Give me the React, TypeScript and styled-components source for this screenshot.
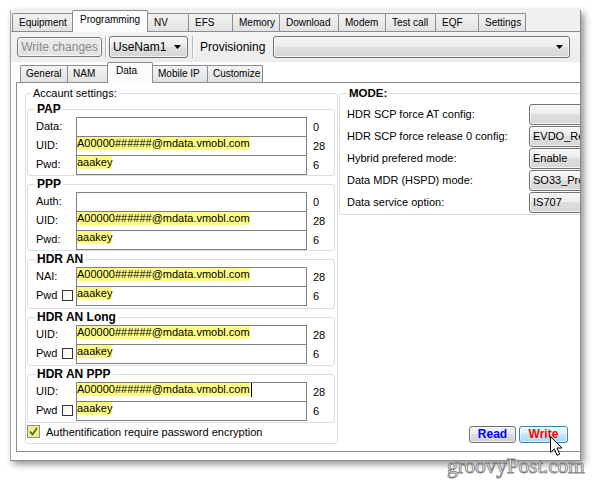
import React from "react";
import styled, { createGlobalStyle } from "styled-components";

const GlobalStyle = createGlobalStyle`
  html, body {
    margin: 0;
    padding: 0;
    background: #fff;
  }
  body {
    font-family: "Liberation Sans", Arial, sans-serif;
    font-size: 11px;
    color: #000;
  }
  * {
    box-sizing: border-box;
  }
`;

const Page = styled.div`
  position: relative;
  width: 597px;
  height: 480px;
  padding: 10px 0 0 10px;
  overflow: hidden;
`;

const Window = styled.div`
  width: 571px;
  height: 451px;
  display: flex;
  flex-direction: column;
  background: #f0f0f0;
  border-left: 1px solid #a7a7a7;
  border-right: 1px solid #8a8a8a;
  border-bottom: 1px solid #8a8a8a;
  box-shadow: 3px 3px 7px rgba(0, 0, 0, 0.45);
  overflow: hidden;
`;

const TabStrip = styled.div<{ $h: number; $pad: number }>`
  display: flex;
  align-items: flex-end;
  height: ${(p) => p.$h}px;
  padding-left: ${(p) => p.$pad}px;
  flex-shrink: 0;
`;

const OuterStrip = styled(TabStrip)`
  border-bottom: 1px solid #898c95;
`;

const Tab = styled.div<{ $w: number; $active?: boolean; $small?: boolean }>`
  position: relative;
  z-index: ${(p) => (p.$active ? 2 : 1)};
  width: ${(p) => p.$w}px;
  height: ${(p) =>
    p.$small ? (p.$active ? 21 : 17) : p.$active ? 22 : 18}px;
  margin-right: -1px;
  margin-bottom: ${(p) => (p.$active ? -1 : 0)}px;
  padding: ${(p) => (p.$small ? "1px" : "2px")} 0 0
    ${(p) => (p.$active ? (p.$small ? 8 : 7) : p.$small ? 5 : 6)}px;
  border: 1px solid #898c95;
  border-bottom: none;
  border-radius: 2px 2px 0 0;
  background: ${(p) =>
    p.$active ? "#fcfcfc" : "linear-gradient(#f3f3f3, #e2e2e2)"};
  font-size: 10px;
  line-height: ${(p) => (p.$small ? 13 : 14)}px;
  white-space: nowrap;
`;

const Toolbar = styled.div`
  display: flex;
  align-items: center;
  height: 30px;
  padding-left: 6px;
  flex-shrink: 0;
  background: linear-gradient(#f4f4f4, #ececec);
  font-size: 12px;
`;

const ToolButton = styled.div`
  width: 85px;
  height: 20px;
  border: 1px solid #7c7c7c;
  border-radius: 3px;
  background: linear-gradient(#ececec, #e2e2e2);
  box-shadow: inset 0 0 0 1px #f7f7f7;
  color: #8a8a8a;
  text-align: center;
  line-height: 18px;
`;

const Separator = styled.div<{ $l: number; $r: number }>`
  width: 2px;
  height: 22px;
  margin: 0 ${(p) => p.$r}px 0 ${(p) => p.$l}px;
  border-left: 1px solid #b8b8b8;
  border-right: 1px solid #fff;
`;

const Combo = styled.div<{ $w: number; $h: number; $ml?: number }>`
  display: flex;
  align-items: center;
  flex-shrink: 0;
  width: ${(p) => p.$w}px;
  height: ${(p) => p.$h}px;
  margin-left: ${(p) => p.$ml ?? 0}px;
  padding: 0 6px 0 3px;
  border: 1px solid #707070;
  border-radius: 3px;
  background: linear-gradient(#f6f6f6 0%, #ececec 49%, #dedede 50%, #d6d6d6 100%);
  box-shadow: inset 0 0 0 1px rgba(255, 255, 255, 0.7);
  white-space: nowrap;
  overflow: hidden;
`;

const ComboText = styled.span`
  flex: 1;
`;

const ToolLabel = styled.span`
  white-space: nowrap;
`;

const Content = styled.div`
  flex: 1;
  display: flex;
  flex-direction: column;
  background: #fff;
  padding: 0 0 6px 5px;
`;

const Panel = styled.div`
  display: flex;
  gap: 1px;
  width: 620px;
  flex-shrink: 0;
  padding: 4px 0 7px 8px;
  border: 1px solid #898c95;
  background: #fff;
`;

const Group = styled.fieldset<{ $w?: number; $pad: string; $mt?: number }>`
  margin: ${(p) => p.$mt ?? 0}px 0 0 0;
  min-width: 0;
  ${(p) => (p.$w ? `width: ${p.$w}px; flex-shrink: 0;` : "")}
  padding: ${(p) => p.$pad};
  border: 1px solid #d5dfe5;
  border-radius: 3px;
`;

const Legend = styled.legend<{ $bold?: boolean; $ml: number }>`
  margin-left: ${(p) => p.$ml}px;
  padding: 0 2px;
  font-size: ${(p) => (p.$bold ? 12 : 11)}px;
  font-weight: ${(p) => (p.$bold ? 700 : 400)};
  line-height: ${(p) => (p.$bold ? 14 : 13)}px;
`;

const ModeLegend = styled(Legend)`
  font-size: 11.5px;
  line-height: 13px;
`;

const Row = styled.div`
  display: flex;
  align-items: flex-start;
  height: 19px;
`;

const RowLabel = styled.div<{ $w: number }>`
  width: ${(p) => p.$w}px;
  height: 19px;
  line-height: 19px;
  flex-shrink: 0;
`;

const Box = styled.div`
  width: 11px;
  height: 11px;
  margin: 4px 3px 0 0;
  flex-shrink: 0;
  border: 1px solid #333;
  background: linear-gradient(135deg, #f4f4f4, #ffffff);
`;

const Input = styled.div`
  width: 231px;
  height: 20px;
  flex-shrink: 0;
  border: 1px solid #7f7f7f;
  background: #fff;
  line-height: 13px;
  white-space: nowrap;
`;

const Marked = styled.span`
  display: inline-block;
  background: #fdfd84;
  line-height: 13px;
`;

const Caret = styled.span`
  display: inline-block;
  width: 1px;
  height: 14px;
  margin-left: 1px;
  vertical-align: top;
  background: #000;
`;

const Count = styled.div`
  margin-left: 6px;
  line-height: 20px;
`;

const AuthRow = styled.div`
  display: flex;
  align-items: center;
  height: 13px;
  margin-top: 2px;
`;

const AuthBox = styled.div`
  width: 13px;
  height: 13px;
  margin-right: 6px;
  border: 1px solid #8e8f8f;
  background: #f0ee8a;
  display: flex;
  align-items: center;
  justify-content: center;
`;

const RightColumn = styled.div`
  display: flex;
  flex-direction: column;
  width: 262px;
  flex-shrink: 0;
`;

const ModeRow = styled.div`
  display: flex;
  align-items: center;
  height: 22px;
`;

const ModeLabel = styled.div`
  width: 182px;
  flex-shrink: 0;
`;

const ButtonRow = styled.div`
  display: flex;
  gap: 3px;
  margin-top: auto;
  margin-bottom: 1px;
  padding-left: 130px;
`;

const ActionButton = styled.div<{ $w: number; $color: string; $hot?: boolean }>`
  width: ${(p) => p.$w}px;
  height: 17px;
  border: 1px solid ${(p) => (p.$hot ? "#3c7fb1" : "#707070")};
  border-radius: 3px;
  background: ${(p) =>
    p.$hot
      ? "linear-gradient(#eaf6fd 0%, #d9f0fc 49%, #bee6fd 50%, #a7d9f5 100%)"
      : "linear-gradient(#f2f2f2 0%, #ebebeb 49%, #dddddd 50%, #cfcfcf 100%)"};
  box-shadow: inset 0 0 0 1px rgba(255, 255, 255, 0.6);
  color: ${(p) => p.$color};
  font-size: 12px;
  font-weight: 700;
  text-align: center;
  line-height: 15px;
`;

const Cursor = styled.svg`
  position: absolute;
  left: 550px;
  top: 436px;
`;

const Watermark = styled.div`
  position: absolute;
  left: 447px;
  top: 454px;
  font-family: "Liberation Serif", "Times New Roman", serif;
  font-size: 21.5px;
  color: #f3f3f3;
  -webkit-text-stroke: 0.8px #7a7a7a;
  letter-spacing: -0.2px;
  white-space: nowrap;
`;

const Arrow = () => (
  <svg width="7" height="4" viewBox="0 0 7 4">
    <path d="M0 0h7L3.5 4z" fill="#000" />
  </svg>
);

type Field = {
  label: string;
  value: string;
  count: number;
  check?: boolean;
  caret?: boolean;
};

type Section = { title: string; tail: number; rows: Field[] };

const UID = "A00000######@mdata.vmobl.com";

const sections: Section[] = [
  {
    title: "PAP",
    tail: 1,
    rows: [
      { label: "Data:", value: "", count: 0 },
      { label: "UID:", value: UID, count: 28 },
      { label: "Pwd:", value: "aaakey", count: 6 },
    ],
  },
  {
    title: "PPP",
    tail: 1,
    rows: [
      { label: "Auth:", value: "", count: 0 },
      { label: "UID:", value: UID, count: 28 },
      { label: "Pwd:", value: "aaakey", count: 6 },
    ],
  },
  {
    title: "HDR AN",
    tail: 3,
    rows: [
      { label: "NAI:", value: UID, count: 28 },
      { label: "Pwd", value: "aaakey", count: 6, check: true },
    ],
  },
  {
    title: "HDR AN Long",
    tail: 2,
    rows: [
      { label: "UID:", value: UID, count: 28 },
      { label: "Pwd", value: "aaakey", count: 6, check: true },
    ],
  },
  {
    title: "HDR AN PPP",
    tail: 2,
    rows: [
      { label: "UID:", value: UID, count: 28, caret: true },
      { label: "Pwd", value: "aaakey", count: 6, check: true },
    ],
  },
];

const outerTabs: [string, number][] = [
  ["Equipment", 61],
  ["Programming", 76],
  ["NV", 42],
  ["EFS", 45],
  ["Memory", 48],
  ["Download", 60],
  ["Modem", 48],
  ["Test call", 51],
  ["EQF", 44],
  ["Settings", 48],
];

const innerTabs: [string, number][] = [
  ["General", 48],
  ["NAM", 41],
  ["Data", 46],
  ["Mobile IP", 56],
  ["Customize", 56],
];

const modes: [string, string][] = [
  ["HDR SCP force AT config:", ""],
  ["HDR SCP force release 0 config:", "EVDO_Rev0"],
  ["Hybrid prefered mode:", "Enable"],
  ["Data MDR (HSPD) mode:", "SO33_Pref"],
  ["Data service option:", "IS707"],
];

const FieldRow = ({ row }: { row: Field }) => (
  <Row>
    <RowLabel $w={row.check ? 26 : 40}>{row.label}</RowLabel>
    {row.check && <Box />}
    <Input>
      {row.value && <Marked>{row.value}</Marked>}
      {row.caret && <Caret />}
    </Input>
    <Count>{row.count}</Count>
  </Row>
);

const App = () => {
  return (
    <Page>
      <GlobalStyle />
      <Window>
        <OuterStrip $h={22} $pad={1}>
          {outerTabs.map(([name, w]) => (
            <Tab key={name} $w={w} $active={name === "Programming"}>
              {name}
            </Tab>
          ))}
        </OuterStrip>

        <Toolbar>
          <ToolButton>Write changes</ToolButton>
          <Separator $l={3} $r={2} />
          <Combo $w={79} $h={22}>
            <ComboText>UseNam1</ComboText>
            <Arrow />
          </Combo>
          <Separator $l={4} $r={6} />
          <ToolLabel>Provisioning</ToolLabel>
          <Combo $w={297} $h={22} $ml={8}>
            <ComboText />
            <Arrow />
          </Combo>
        </Toolbar>

        <Content>
          <TabStrip $h={20} $pad={4}>
            {innerTabs.map(([name, w]) => (
              <Tab key={name} $w={w} $small $active={name === "Data"}>
                {name}
              </Tab>
            ))}
          </TabStrip>

          <Panel>
            <Group $w={313} $pad="2px 2px 5px 1px">
              <Legend $ml={4}>Accaunt settings:</Legend>
              {sections.map((s, i) => (
                <Group
                  key={s.title}
                  $pad={`1px 0 ${s.tail}px 8px`}
                  $mt={i === 0 ? 0 : 1}
                >
                  <Legend $bold $ml={-1}>
                    {s.title}
                  </Legend>
                  {s.rows.map((r, j) => (
                    <FieldRow key={j} row={r} />
                  ))}
                </Group>
              ))}
              <AuthRow>
                <AuthBox>
                  <svg width="9" height="9" viewBox="0 0 9 9">
                    <path
                      d="M1 4.5 L3.5 7.5 L8 1"
                      fill="none"
                      stroke="#4d5a2a"
                      strokeWidth="1.6"
                    />
                  </svg>
                </AuthBox>
                Authentification require password encryption
              </AuthRow>
            </Group>

            <RightColumn>
              <Group $pad="3px 0 1px 7px">
                <ModeLegend $bold $ml={0}>
                  MODE:
                </ModeLegend>
                {modes.map(([label, value]) => (
                  <ModeRow key={label}>
                    <ModeLabel>{label}</ModeLabel>
                    <Combo $w={90} $h={21}>
                      <ComboText>{value}</ComboText>
                    </Combo>
                  </ModeRow>
                ))}
              </Group>
              <ButtonRow>
                <ActionButton $w={47} $color="#0000ff">
                  Read
                </ActionButton>
                <ActionButton $w={49} $color="#ff0000" $hot>
                  Write
                </ActionButton>
              </ButtonRow>
            </RightColumn>
          </Panel>
        </Content>
      </Window>

      <Cursor width="13" height="21" viewBox="0 0 13 21">
        <path
          d="M0.5 0.5 L0.5 16.5 L4.3 12.8 L7 19.3 L9.6 18.2 L7 12 L12 12 Z"
          fill="#fff"
          stroke="#000"
          strokeWidth="1"
          strokeLinejoin="round"
        />
      </Cursor>
      <Watermark>groovyPost.com</Watermark>
    </Page>
  );
};

export default App;
